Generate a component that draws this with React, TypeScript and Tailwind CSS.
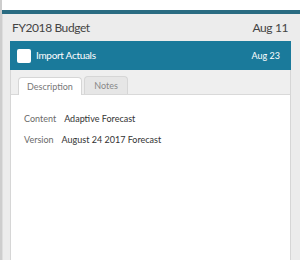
import React from "react";

const font = { fontFamily: "Lato, 'Open Sans', sans-serif" };

export default function App() {
  return (
    <div className="w-[300px] h-[260px] flex bg-white overflow-hidden" style={font}>
      <div className="w-[2px] h-full bg-[#cdcdcd]" />
      <div className="flex-1 flex flex-col">
        <div className="h-[10px] bg-white" />
        <div className="h-[4px] bg-[#2a6c82]" />
        <div className="flex-1 flex flex-col bg-[#ececec] border-l border-[#dedede] pl-[7px] pr-[9px]">
          <div className="h-[27px] flex items-center justify-between pl-[2px] pr-[3px] text-[#444] text-[12px] tracking-[-0.4px]">
            <span>FY2018 Budget</span>
            <span>Aug 11</span>
          </div>
          <div className="h-[29px] flex items-center justify-between bg-[#1a7a9b] pl-[7px] pr-[11px] text-white">
            <div className="flex items-center gap-[5px]">
              <div className="w-[14px] h-[14px] rounded-[2px] bg-white" />
              <span className="text-[10px] tracking-[-0.3px]">Import Actuals</span>
            </div>
            <span className="text-[9px]">Aug 23</span>
          </div>
          <div className="flex-1 flex flex-col border-x border-[#d6d6d6] bg-white">
            <div className="h-[25px] flex items-end gap-[2px] pl-[7px] bg-[#efefef] border-b border-[#d9d9d9]">
              <div className="w-[64px] h-[18px] -mb-px flex items-center justify-center bg-white border border-b-0 border-[#d6d6d6] rounded-t-[4px] text-[9px] text-[#777]">
                Description
              </div>
              <div className="w-[44px] h-[18px] flex items-center justify-center bg-[#e6e6e6] border border-b-0 border-[#d6d6d6] rounded-t-[4px] text-[9px] text-[#888]">
                Notes
              </div>
            </div>
            <div className="flex flex-col gap-[7px] pt-[17px] pl-[13px] text-[9px]">
              <div className="h-[14px] flex items-center">
                <span className="text-[#6a6a6a] mr-[8px]">Content</span>
                <span className="text-[#333]">Adaptive Forecast</span>
              </div>
              <div className="h-[14px] flex items-center">
                <span className="text-[#6a6a6a] mr-[8px]">Version</span>
                <span className="text-[#333]">August 24 2017 Forecast</span>
              </div>
            </div>
          </div>
        </div>
      </div>
    </div>
  );
}
